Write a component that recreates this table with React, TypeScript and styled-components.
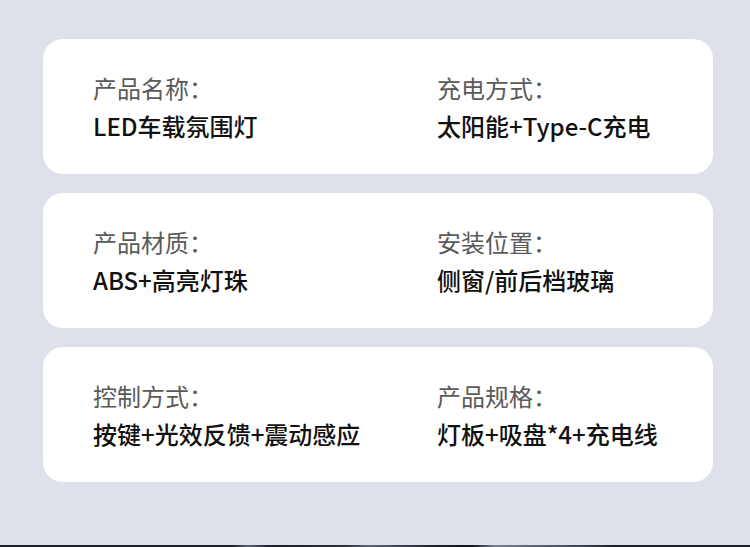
import React from "react";
import styled, { createGlobalStyle } from "styled-components";

const GlobalStyle = createGlobalStyle`
  html, body {
    margin: 0;
    padding: 0;
    background: #dee1ea;
  }
  * { box-sizing: border-box; }
`;

const Page = styled.div`
  width: 750px;
  height: 547px;
  display: flex;
  flex-direction: column;
  background: #dee1ea;
  font-family: "Noto Sans CJK SC", "Noto Sans", sans-serif;
  overflow: hidden;
`;

const CardList = styled.div`
  display: flex;
  flex-direction: column;
  gap: 19px;
  padding: 39px 37px 0 43px;
  flex: 1;
`;

const Card = styled.div`
  height: 135px;
  background: #ffffff;
  border-radius: 20px;
  display: grid;
  grid-template-columns: 344px 1fr;
  align-items: center;
  padding: 0 30px 0 50px;
`;

const Field = styled.div`
  display: flex;
  flex-direction: column;
  gap: 0;
`;

const Label = styled.div`
  font-size: 24px;
  line-height: 38px;
  color: #5a5a5a;
  font-weight: 400;
  white-space: nowrap;
`;

const Value = styled.div`
  font-size: 24px;
  line-height: 38px;
  color: #111111;
  font-weight: 500;
  white-space: nowrap;
`;

const BottomEdge = styled.div`
  height: 2px;
  background: linear-gradient(
    90deg,
    #1b1f27 0%,
    #1b1f27 31%,
    #5b6270 33%,
    #1b1f27 36%,
    #2a2f38 46%,
    #5e6673 49%,
    #1b1f27 58%,
    #14171c 63%,
    #7a818d 66%,
    #3b414b 78%,
    #1b1f27 82%,
    #1b1f27 100%
  );
`;

const rows: [string, string, string, string][] = [
  ["产品名称：", "LED车载氛围灯", "充电方式：", "太阳能+Type-C充电"],
  ["产品材质：", "ABS+高亮灯珠", "安装位置：", "侧窗/前后档玻璃"],
  ["控制方式：", "按键+光效反馈+震动感应", "产品规格：", "灯板+吸盘*4+充电线"],
];

export default function App() {
  return (
    <>
      <GlobalStyle />
      <Page>
        <CardList>
          {rows.map((r, i) => (
            <Card key={i}>
              <Field>
                <Label>{r[0]}</Label>
                <Value>{r[1]}</Value>
              </Field>
              <Field>
                <Label>{r[2]}</Label>
                <Value>{r[3]}</Value>
              </Field>
            </Card>
          ))}
        </CardList>
        <BottomEdge />
      </Page>
    </>
  );
}
